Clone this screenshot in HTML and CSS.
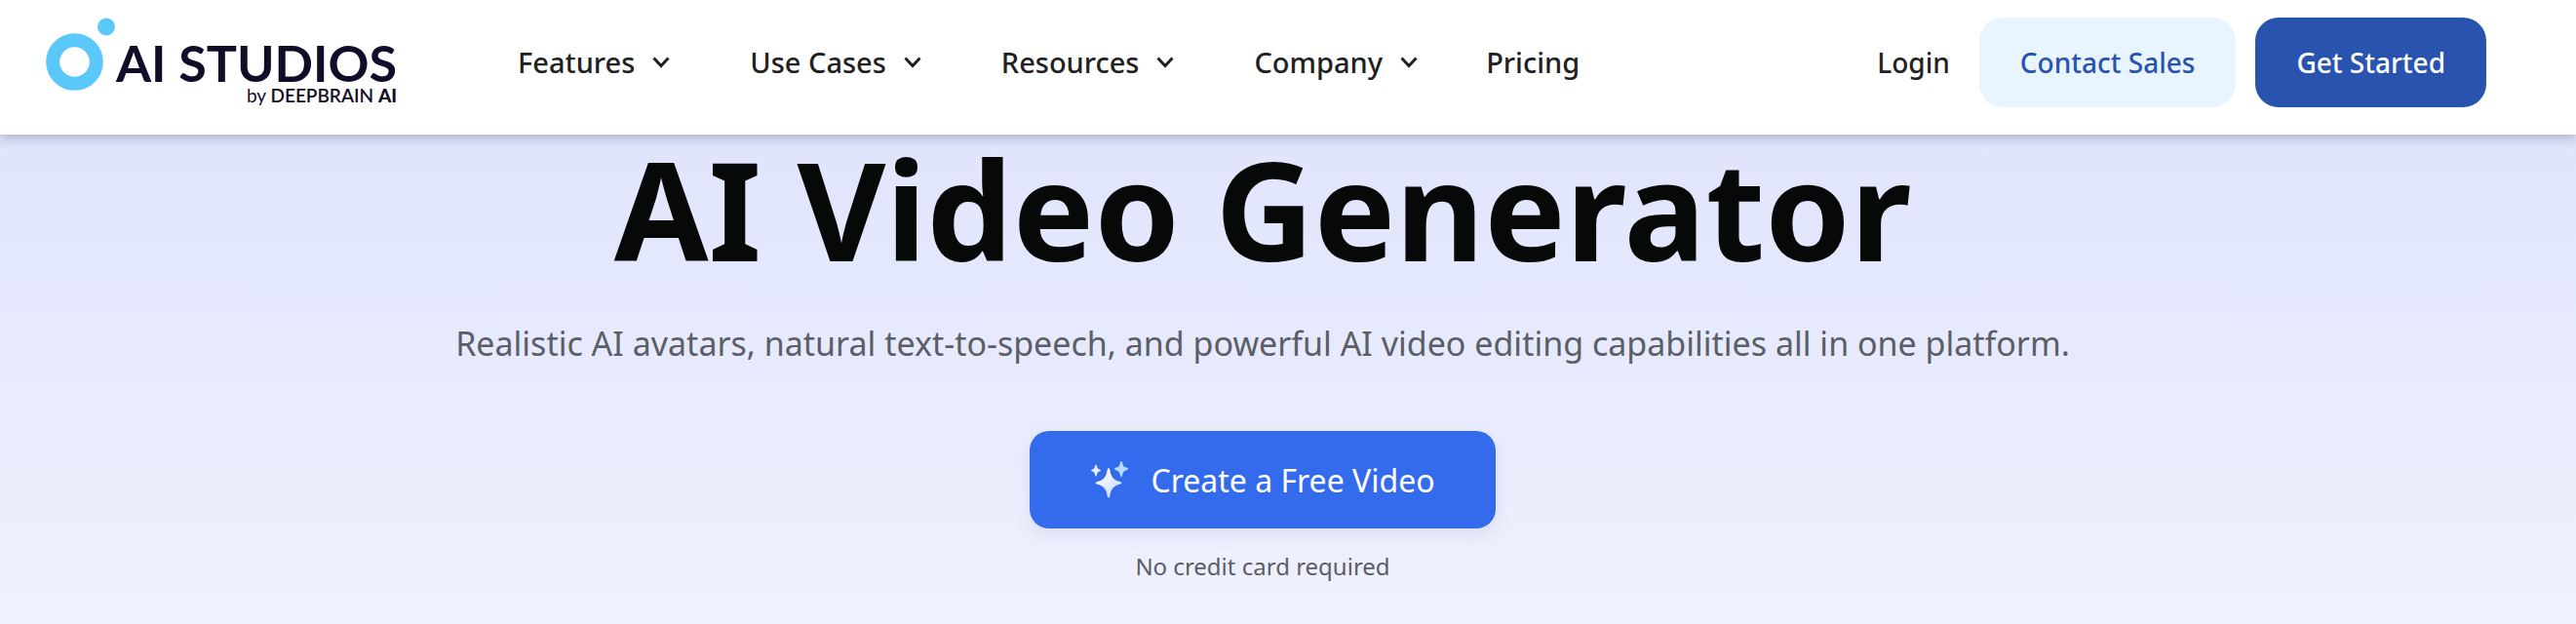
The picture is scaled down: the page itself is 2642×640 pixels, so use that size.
FILE: index.html
```
<!DOCTYPE html>
<html lang="en">
<head>
    <meta charset="UTF-8">
    <meta name="viewport" content="width=device-width, initial-scale=1.0">
    <title>AI Video Generator</title>
    <link rel="stylesheet" href="styles.css">
</head>
<body>

<header class="header">
    <a class="logo" href="#">
        <svg class="logo-mark" width="72" height="76" viewBox="0 0 72 76" aria-hidden="true">
            <circle cx="29.5" cy="45.5" r="22.3" fill="none" stroke="#5ac8fa" stroke-width="14"/>
            <circle cx="62" cy="9.500" r="9" fill="#5ac8fa"/>
        </svg>
        <span class="logo-text">
            <span class="logo-name">AI STUDIOS</span>
            <span class="logo-by">by <b>DEEPBRAIN</b> <strong>AI</strong></span>
        </span>
    </a>

    <nav class="nav">
        <button class="nav-item nav-drop" type="button">Features
            <svg class="chevron" width="18" height="12" viewBox="0 0 18 12" aria-hidden="true"><path d="M1.5 1.5 9 9.5 16.5 1.5"/></svg>
        </button>
        <button class="nav-item nav-drop" type="button">Use Cases
            <svg class="chevron" width="18" height="12" viewBox="0 0 18 12" aria-hidden="true"><path d="M1.5 1.5 9 9.5 16.5 1.5"/></svg>
        </button>
        <button class="nav-item nav-drop" type="button">Resources
            <svg class="chevron" width="18" height="12" viewBox="0 0 18 12" aria-hidden="true"><path d="M1.5 1.5 9 9.5 16.5 1.5"/></svg>
        </button>
        <button class="nav-item nav-drop" type="button">Company
            <svg class="chevron" width="18" height="12" viewBox="0 0 18 12" aria-hidden="true"><path d="M1.5 1.5 9 9.5 16.5 1.5"/></svg>
        </button>
        <a class="nav-item" href="#">Pricing</a>
    </nav>

    <div class="actions">
        <a class="login" href="#">Login</a>
        <button class="btn btn-light" type="button">Contact Sales</button>
        <button class="btn btn-dark" type="button">Get Started</button>
    </div>
</header>

<main class="hero">
    <h1>AI Video Generator</h1>
    <p class="subtitle">Realistic AI avatars, natural text-to-speech, and powerful AI video editing capabilities all in one platform.</p>
    <button class="cta" type="button">
        <svg width="40" height="40" viewBox="0 0 40 40" aria-hidden="true">
            <defs>
                <linearGradient id="big" x1="0" y1="0" x2="1" y2="1">
                    <stop offset="0.4" stop-color="#f0f0ff"/>
                    <stop offset="1" stop-color="#b4d2ff"/>
                </linearGradient>
            </defs>
            <path fill="url(#big)" d="M19 8Q20.200 8 20.500 10.500C21.300 17 24.500 20.600 30.500 21.900Q32.500 22.300 32.500 23.300Q32.500 24.300 30.500 24.700C24.500 26 21.300 29.500 20.500 36Q20.200 38.500 19 38.500Q17.800 38.500 17.500 36C16.700 29.500 13.500 26 7.500 24.700Q5.500 24.300 5.500 23.300Q5.500 22.300 7.500 21.900C13.500 20.600 16.700 17 17.500 10.500Q17.800 8 19 8Z"/>
            <path fill="#b5dbff" d="M32 1Q33 1 33.300 3C33.800 6 34.500 7 37 7.600Q39 8 39 9Q39 10 37 10.400C34.500 11 33.800 12 33.300 15Q33 17 32 17Q31 17 30.700 15C30.200 12 29.500 11 27 10.400Q25 10 25 9Q25 8 27 7.600C29.500 7 30.200 6 30.700 3Q31 1 32 1Z"/>
            <path fill="#e4f0ff" d="M6 4.500Q6.700 4.500 7 6C7.400 8.200 8 9 9.700 9.500Q11 9.800 11 10.500Q11 11.200 9.700 11.500C8 12 7.400 12.800 7 15Q6.700 16.500 6 16.500Q5.300 16.500 5 15C4.600 12.800 4 12 2.300 11.500Q1 11.200 1 10.500Q1 9.800 2.300 9.500C4 9 4.600 8.200 5 6Q5.300 4.500 6 4.500Z"/>
        </svg>
        Create a Free Video
    </button>
    <p class="note">No credit card required</p>
</main>

</body>
</html>
```
FILE: styles.css
```
* {
    box-sizing: border-box;
}
body {
    margin: 0;
    min-height: 100vh;
    display: flex;
    flex-direction: column;
    font-family: "Noto Sans", sans-serif;
    color: #212121;
}
button {
    font-family: inherit;
    border: none;
    cursor: pointer;
}
a {
    color: inherit;
    text-decoration: none;
}
.header {
    position: relative;
    display: flex;
    align-items: flex-start;
    padding: 18px 92px 28px 47px;
    background-color: #fff;
    box-shadow: 0 3px 12px rgba(40, 40, 90, 0.3);
}
.logo {
    display: flex;
    color: #120c28;
    font-family: Lato, sans-serif;
}
.logo-text {
    display: flex;
    flex-direction: column;
    align-items: flex-end;
    padding-top: 20px;
}
.logo-name {
    font-size: 52px;
    line-height: 52px;
    font-weight: 700;
}
.logo-by {
    font-size: 19px;
    line-height: 16px;
}
.logo-by b {
    font-weight: 600;
}
.logo-by strong {
    font-weight: 900;
}
/* Navigation */
.nav {
    display: flex;
    align-items: center;
    gap: 70px;
    height: 92px;
    margin-left: 112px;
}
.nav-item {
    display: flex;
    align-items: center;
    gap: 18px;
    padding: 0;
    background: none;
    color: #212121;
    font-size: 29px;
    line-height: 40px;
    font-weight: 500;
}
.nav-drop {
    padding-left: 12px;
}
.chevron {
    fill: none;
    stroke: #212121;
    stroke-width: 3;
}
.actions {
    display: flex;
    align-items: center;
    margin-left: auto;
    font-size: 28px;
    font-weight: 500;
}
.login {
    margin-right: 30px;
}
.btn {
    height: 92px;
    padding: 0 42px;
    border-radius: 24px;
    font-size: 28px;
    font-weight: 500;
}
.btn-light {
    background-color: #e9f5fe;
    color: #2853ae;
    margin-right: 20px;
}
.btn-dark {
    background-color: #2853ae;
    color: #fff;
}
/* Hero */
.hero {
    flex: 1;
    display: flex;
    flex-direction: column;
    align-items: center;
    padding-right: 52px;
    background: linear-gradient(#e0e5fc, #f0f1fe);
}
h1 {
    margin: 0;
    font-size: 140px;
    line-height: 152px;
    font-weight: 700;
    color: #070909;
}
.subtitle {
    margin: 36px 0 0;
    font-size: 34px;
    line-height: 52px;
    color: #5b5e66;
}
.cta {
    display: flex;
    align-items: center;
    gap: 22px;
    height: 100px;
    margin-top: 64px;
    padding: 0 62px;
    border-radius: 20px;
    background-color: #336bec;
    box-shadow: 0 6px 16px rgba(50, 60, 120, 0.1);
    color: #fff;
    font-size: 32px;
    font-weight: 400;
}
.note {
    margin: 22px 0 0;
    font-size: 24px;
    line-height: 34px;
    color: #5b5e66;
}
```
